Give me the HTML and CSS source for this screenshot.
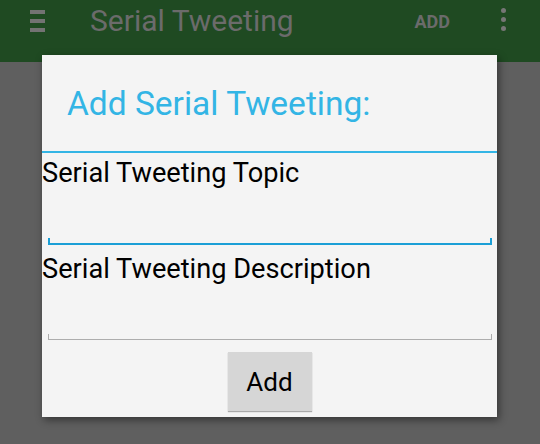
FILE: index.html
```html
<!DOCTYPE html>
<html>
<head>
<meta charset="utf-8">
<link rel="stylesheet" href="styles.css">
</head>
<body>
<div class="appbar">
  <div class="menu"><span></span><span></span><span></span></div>
  <div class="app-title">Serial Tweeting</div>
  <div class="action">ADD</div>
  <div class="overflow"><span></span><span></span><span></span></div>
</div>
<div class="dialog">
  <div class="dlg-title">Add Serial Tweeting:</div>
  <div class="divider"></div>
  <div class="field">
    <div class="label">Serial Tweeting Topic</div>
    <div class="edit focused"></div>
  </div>
  <div class="field second">
    <div class="label">Serial Tweeting Description</div>
    <div class="edit"></div>
  </div>
  <div class="btn-row"><button class="btn">Add</button></div>
</div>
</body>
</html>
```
FILE: styles.css
```css
html, body {
  margin: 0;
  padding: 0;
  width: 540px;
  height: 444px;
  overflow: hidden;
  background: #5f5f5f;
  font-family: Roboto, "Noto Sans", sans-serif;
}
.appbar {
  height: 62px;
  background: #1f4a22;
  display: flex;
  align-items: flex-start;
}
.menu {
  margin-left: 30px;
  margin-top: 10px;
  width: 15px;
  display: flex;
  flex-direction: column;
  gap: 5px;
}
.menu span {
  display: block;
  height: 4px;
  background: #737373;
}
.app-title {
  margin-left: 45px;
  margin-top: 3px;
  font-size: 30px;
  line-height: 36px;
  color: #6b6b6b;
}
.action {
  margin-left: auto;
  margin-top: 12px;
  font-size: 18px;
  line-height: 20px;
  font-weight: bold;
  color: #6b6b6b;
}
.overflow {
  margin-left: 51px;
  margin-right: 34px;
  margin-top: 8px;
  display: flex;
  flex-direction: column;
  gap: 4px;
}
.overflow span {
  display: block;
  width: 5px;
  height: 5px;
  border-radius: 50%;
  background: #767676;
}
.dialog {
  position: absolute;
  left: 42px;
  top: 55px;
  width: 455px;
  height: 362px;
  background: #f4f4f4;
  box-shadow: 2px 3px 8px rgba(0,0,0,0.45);
  display: flex;
  flex-direction: column;
}
.dlg-title {
  height: 96px;
  box-sizing: border-box;
  padding: 29px 0 0 25px;
  font-size: 33.5px;
  line-height: 40px;
  color: #33b5e5;
}
.divider {
  height: 2px;
  background: #33b5e5;
}
.field {
  display: flex;
  flex-direction: column;
}
.label {
  font-size: 27.2px;
  line-height: 32px;
  color: #000;
  margin-top: 4px;
}
.edit {
  margin: 0 5px 0 6px;
  height: 56px;
  position: relative;
}
.edit::after {
  content: "";
  position: absolute;
  left: 0;
  right: 0;
  bottom: 0;
  height: 5px;
  border: 1px solid #adadad;
  border-top: none;
}
.edit.focused::after {
  height: 5px;
  border-width: 2px;
  border-color: #1b9fd6;
}
.field.second .label {
  margin-top: 8px;
}
.field.second .edit {
  height: 55px;
}
.btn-row {
  display: flex;
  justify-content: center;
  margin-top: 12px;
}
.btn {
  width: 84px;
  height: 59px;
  border: none;
  background: #d6d6d6;
  font-family: Roboto, "Noto Sans", sans-serif;
  font-size: 26px;
  color: #000;
  box-shadow: 0 1px 1px rgba(0,0,0,0.3);
  padding: 0;
}
```
